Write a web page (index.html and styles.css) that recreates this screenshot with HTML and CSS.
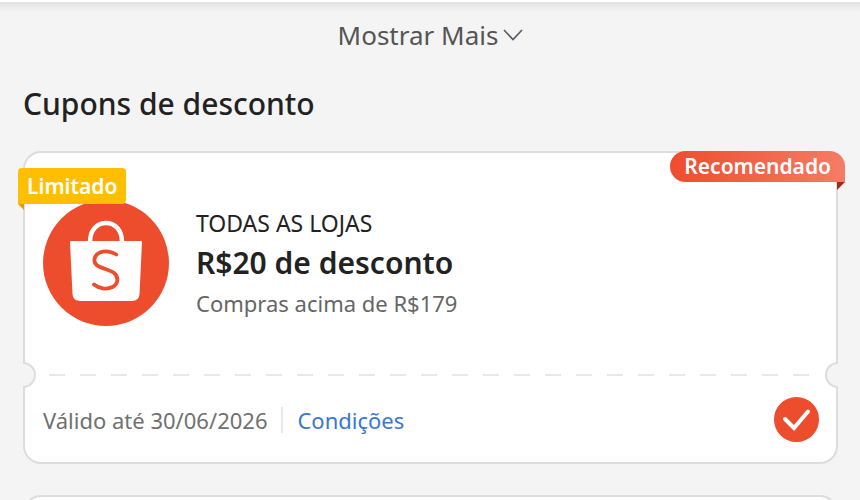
FILE: index.html
```html
<!DOCTYPE html>
<html lang="pt-BR">
<head>
    <meta charset="UTF-8">
    <meta name="viewport" content="width=device-width, initial-scale=1.0">
    <title>Cupons de desconto</title>
    <link rel="stylesheet" href="styles.css">
</head>
<body>
    <div class="top-shadow"></div>
    <main class="page">
        <button type="button" class="show-more">
            Mostrar Mais
            <svg width="20" height="14" viewBox="0 0 20 14" fill="none" stroke="#57575f" stroke-width="1.600">
                <path d="M1 2l9 9.500 9-9.500"/>
            </svg>
        </button>
        <h1 class="section-title">Cupons de desconto</h1>

        <article class="coupon">
            <span class="tag-limited">Limitado</span>
            <span class="tag-recommended">Recomendado</span>
            <div class="coupon-body">
                <svg class="coupon-logo" width="126" height="126" viewBox="0 0 126 126" fill="none">
                    <circle cx="63" cy="63" r="63" fill="#ee4d2d"/>
                    <path d="M47 42C47 30 54 23 63 23S79 30 79 42" stroke="#fff" stroke-width="4.500"/>
                    <path d="M28 41h70q1 0 1 1l-2.500 52q-.5 7-7.500 7H37q-7 0-7.500-7L27 42q0-1 1-1z" fill="#fff"/>
                    <path d="M73.300 54.500C69 51.500 62 50.500 57 52.500C50 55.500 49.500 63.500 56 66.500C61 69 66 69.500 70.500 72.500C76 76.500 75.500 84 69.500 87C63.500 90 56 88.500 51 84.500" stroke="#ee4d2d" stroke-width="3.800" stroke-linecap="round"/>
                </svg>
                <div class="coupon-info">
                    <p class="coupon-store">TODAS AS LOJAS</p>
                    <h2 class="coupon-value">R$20 de desconto</h2>
                    <p class="coupon-minimum">Compras acima de R$179</p>
                </div>
            </div>
            <div class="coupon-divider"></div>
            <div class="coupon-footer">
                <span class="coupon-validity">Válido até 30/06/2026</span>
                <a class="coupon-terms" href="#">Condições</a>
                <label class="coupon-check">
                    <input type="checkbox" aria-label="Selecionar cupom" checked>
                    <svg width="45" height="45" viewBox="0 0 45 45" fill="none" stroke="#fff" stroke-width="4" stroke-linecap="round">
                        <path d="M11 22l9 9 14-16.500"/>
                    </svg>
                </label>
            </div>
        </article>

        <article class="coupon coupon-next"></article>
    </main>
</body>
</html>
```

FILE: styles.css
```css
*,
*::before,
*::after {
    box-sizing: border-box;
}
body {
    margin: 0;
    height: 100vh;
    overflow: hidden;
    background-color: #f4f4f4;
    color: #222;
    font-family: "Noto Sans", sans-serif;
    font-size: 22px;
    line-height: 30px;
}
h1, h2, p {
    margin: 0;
}
.top-shadow {
    height: 12px;
    border-top: 2px solid #fff;
    background: linear-gradient(#e2e2e2, #f4f4f4);
}
.page {
    display: flex;
    flex-direction: column;
    padding: 3px 22px 0 23px;
}
.show-more {
    display: flex;
    align-items: center;
    align-self: center;
    gap: 5px;
    padding: 0;
    border: none;
    background: none;
    color: #555;
    font-family: inherit;
    font-size: 26px;
    line-height: 40px;
    cursor: pointer;
}
.section-title {
    margin: 29px 0 27px;
    font-size: 30px;
    font-weight: 500;
    line-height: 40px;
}
.coupon {
    position: relative;
    border: 2px solid #ddd;
    border-radius: 18px;
    background-color: #fff;
}
.coupon-next {
    height: 60px;
    margin-top: 31px;
}
.tag-limited,
.tag-recommended {
    position: absolute;
    color: #fff;
    font-size: 21px;
    font-weight: 600;
}
.tag-limited {
    top: 15px;
    left: -7px;
    padding: 0 9px;
    border-radius: 4px 4px 4px 0;
    background-color: #ffbf00;
    line-height: 36px;
}
.tag-recommended {
    top: -2px;
    right: -9px;
    padding: 0 14px;
    border-radius: 16px 16px 0 16px;
    background: linear-gradient(to right, #ee4d2d, #f57c66);
    line-height: 31px;
}
/* folded ends of the ribbons */
.tag-limited::after,
.tag-recommended::after {
    content: '';
    position: absolute;
    top: 100%;
    border-style: solid;
    border-color: transparent;
}
.tag-limited::after {
    left: 0;
    border-width: 0 6px 6px 0;
    border-right-color: #dca000;
}
.tag-recommended::after {
    right: 0;
    border-width: 8px 8px 0 0;
    border-top-color: #a52a14;
}
.coupon-body {
    display: flex;
    align-items: center;
    gap: 27px;
    padding: 47px 18px 48px;
}
.coupon-logo {
    flex-shrink: 0;
}
.coupon-store {
    font-size: 23px;
}
.coupon-value {
    margin: 4px 0;
    font-size: 30px;
    font-weight: 600;
    line-height: 42px;
}
.coupon-minimum {
    color: #666;
}
.coupon-divider {
    position: relative;
    height: 2px;
    margin: 0 24px;
    background: repeating-linear-gradient(to right, #e8e8e8 0 16px, transparent 16px 31px);
}
/* half round cut-outs on both sides */
.coupon-divider::before,
.coupon-divider::after {
    content: '';
    position: absolute;
    top: -12px;
    width: 13px;
    height: 26px;
    border: 2px solid #ddd;
    background-color: #f4f4f4;
}
.coupon-divider::before {
    left: -26px;
    border-left: none;
    border-radius: 0 13px 13px 0;
}
.coupon-divider::after {
    right: -26px;
    border-right: none;
    border-radius: 13px 0 0 13px;
}
.coupon-footer {
    display: flex;
    align-items: center;
    padding: 21px 17px 20px 18px;
}
.coupon-validity {
    color: #707070;
}
.coupon-terms {
    margin-left: 14px;
    padding-left: 14px;
    border-left: 2px solid #e8e8e8;
    color: #3b78cf;
    line-height: 26px;
    text-decoration: none;
}
.coupon-check {
    display: grid;
    margin-left: auto;
    cursor: pointer;
}
.coupon-check input,
.coupon-check svg {
    grid-area: 1 / 1;
}
.coupon-check input {
    appearance: none;
    width: 45px;
    height: 45px;
    margin: 0;
    border: 2px solid #ddd;
    border-radius: 50%;
    cursor: pointer;
}
.coupon-check input:checked {
    border-color: #ee4d2d;
    background-color: #ee4d2d;
}
.coupon-check svg {
    pointer-events: none;
}
```
